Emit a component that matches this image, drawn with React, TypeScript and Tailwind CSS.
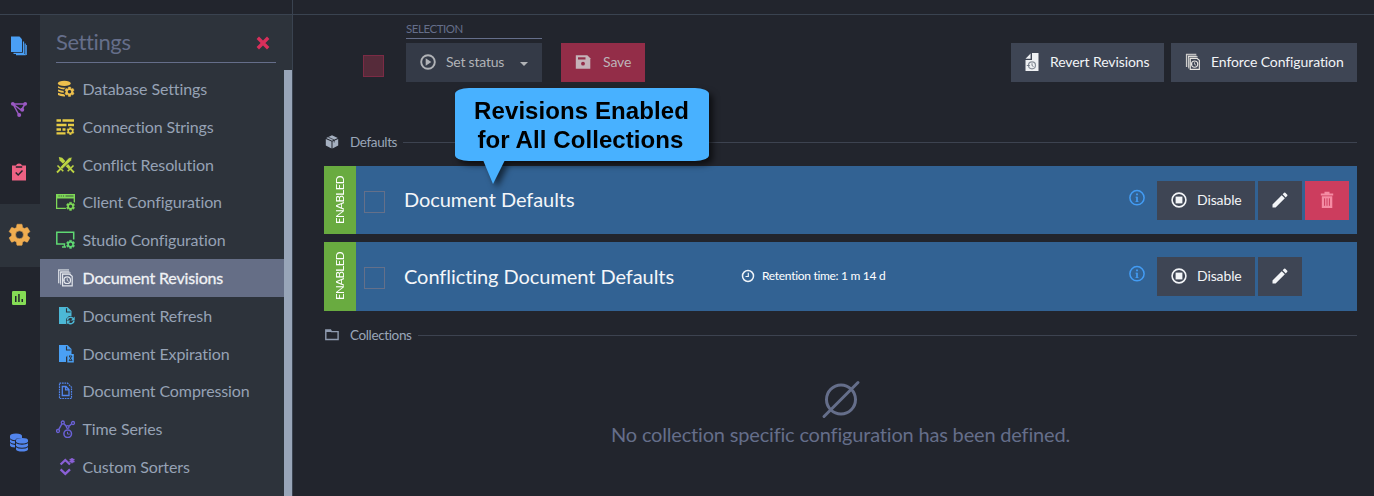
import React from "react";

const gearPath =
  "M19.14 12.94c.04-.3.06-.61.06-.94s-.02-.64-.07-.94l2.03-1.58a.49.49 0 0 0 .12-.61l-1.92-3.32a.49.49 0 0 0-.59-.22l-2.39.96a7 7 0 0 0-1.62-.94l-.36-2.54a.48.48 0 0 0-.48-.41h-3.84a.47.47 0 0 0-.47.41l-.36 2.54c-.59.24-1.13.57-1.62.94l-2.39-.96a.48.48 0 0 0-.59.22L2.74 8.87a.48.48 0 0 0 .12.61l2.03 1.58c-.05.3-.09.63-.09.94s.02.64.07.94l-2.03 1.58a.49.49 0 0 0-.12.61l1.92 3.32c.12.22.37.29.59.22l2.39-.96c.5.38 1.03.7 1.62.94l.36 2.54c.05.24.24.41.48.41h3.84c.24 0 .44-.17.47-.41l.36-2.54c.59-.24 1.13-.56 1.62-.94l2.39.96c.22.08.47 0 .59-.22l1.92-3.32a.48.48 0 0 0-.12-.61zM12 15.6a3.6 3.6 0 1 1 0-7.2 3.6 3.6 0 0 1 0 7.2z";

const Gear = ({ x, y, s, bg }: { x: number; y: number; s: number; bg?: string }) => (
  <g transform={`translate(${x} ${y}) scale(${s / 20})`}>
    {bg && <circle cx="10" cy="10" r="12" fill={bg} />}
    <path transform="translate(-2 -2)" fill="currentColor" stroke="currentColor" strokeWidth="1" d={gearPath} />
  </g>
);

const PANEL = "#2d333b";

/* Menu icons share a 20x18 canvas */
const MenuSvg = ({ children }: { children: React.ReactNode }) => (
  <svg width="20" height="18" viewBox="0 0 20 18" fill="none" stroke="none">
    {children}
  </svg>
);

const DatabaseSettings = () => (
  <MenuSvg>
    <ellipse cx="8.3" cy="3.4" rx="6.4" ry="2.7" fill="currentColor" />
    <path d="M2 6.2q6 3 12.6 0v1.6q-6.4 3.2-12.6 0zM2 9.5q3.4 1.600 7 1.400v1.900q-4 .1-7-1.500zM2 12.800q3.400 1.600 7 1.400v2.200q-4.400.2-7-1.400z" fill="currentColor" />
    <Gear x={8.600} y={6.800} s={9.800} bg={PANEL} />
    <circle cx="13.500" cy="11.700" r="1.600" fill={PANEL} />
  </MenuSvg>
);

const ConnectionStrings = () => (
  <MenuSvg>
    <path d="M.5 1.200h4.500v2.500h-4.500zM6.500 1.200h11.500v2.500h-11.500zM.5 5.700h10v2.500h-10zM12 5.700h6v2.500h-6zM.5 10.200h4.500v2.500h-4.500zM6.500 10.200h3v2.500h-3zM.5 14.200h9v2.300h-9z" fill="currentColor" />
    <Gear x={10.700} y={9.300} s={7.500} bg={PANEL} />
    <circle cx="14.450" cy="13.050" r="1.300" fill={PANEL} />
  </MenuSvg>
);

const ConflictResolution = () => (
  <MenuSvg>
    <path d="M2.800 1l3.400.8 8.800 9.400-2.200 2L3.600 4.500z" fill="currentColor" />
    <path d="M16.200 1l-3.400.8L4 11.200l2.200 2L15.400 4.500z" fill="currentColor" stroke={PANEL} strokeWidth=".7" />
    <path d="M1.500 9.500l5.800 5.800M17.500 9.500l-5.800 5.800" stroke="currentColor" strokeWidth="1.600" />
    <path d="M1 16.500l3.800-3.800M18 16.500l-3.800-3.800" stroke="currentColor" strokeWidth="1.900" />
  </MenuSvg>
);

const ClientConfiguration = () => (
  <MenuSvg>
    <path d="M0 1h19v4.500H0z" fill="currentColor" />
    <path d="M2.500 3h1.200M4.700 3h1.200M6.900 3h1.200M9.500 3h8" stroke={PANEL} strokeWidth=".8" />
    <path d="M.6 5v10.300h9.500M18.300 5v4.500" stroke="currentColor" strokeWidth="1.300" />
    <Gear x={10.200} y={9} s={8.700} bg={PANEL} />
    <circle cx="14.550" cy="13.350" r="1.500" fill={PANEL} />
  </MenuSvg>
);

const StudioConfiguration = () => (
  <MenuSvg>
    <path d="M9.500 13H.8V1.200h16.900V8.500" stroke="currentColor" strokeWidth="1.500" />
    <path d="M6 16h4M8.500 13v3" stroke="currentColor" strokeWidth="1.500" />
    <Gear x={10.200} y={9} s={8.700} bg={PANEL} />
    <circle cx="14.550" cy="13.350" r="1.500" fill={PANEL} />
  </MenuSvg>
);

const RevisionGlyph = ({ bg }: { bg: string }) => (
  <>
    <path d="M2 .3h11v14H2z" fill="currentColor" opacity=".85" />
    <path d="M3.700 15.500V2h11" stroke={bg} strokeWidth=".8" />
    <path d="M4.200 2.500h9l1.500 1v12.300H4.200z" fill="currentColor" opacity=".85" />
    <path d="M5.600 17V4.200h9.200" stroke={bg} strokeWidth=".9" />
    <path d="M6.600 5.200h7l2.600 2v9.600H6.600z" fill={bg} stroke="currentColor" strokeWidth="1.200" />
    <circle cx="11.200" cy="11.200" r="3.300" stroke="currentColor" strokeWidth="1.200" />
    <path d="M11.200 9.300v2.200l1.500.9M7 11.200h2" stroke="currentColor" strokeWidth=".9" />
  </>
);

const DocumentRevisions = () => (
  <MenuSvg>
    <RevisionGlyph bg="#656e86" />
  </MenuSvg>
);

const DocBase = () => (
  <>
    <path d="M3 0h8.500l4 4V9h-2.500l-3 3v5H3z" fill="currentColor" />
    <path d="M10.500 1.200v3.800h4" stroke={PANEL} strokeWidth="1.100" />
  </>
);

const DocumentRefresh = () => (
  <MenuSvg>
    <DocBase />
    <path d="M11.300 13a3.300 3.300 0 0 1 5.800-1.500M18 14a3.300 3.300 0 0 1-5.800 1.500" stroke="currentColor" strokeWidth="1.500" />
    <path d="M18.700 9.500v4h-3.800zM10.700 17.500v-4h3.800z" fill="currentColor" />
  </MenuSvg>
);

const DocumentExpiration = () => (
  <MenuSvg>
    <DocBase />
    <path d="M11.300 9h6.500v8.500h-6.500z" fill="currentColor" />
    <path d="M13 11h3l-2.900 4.600h3l-2.900-4.600z" stroke={PANEL} strokeWidth=".9" />
  </MenuSvg>
);

const DocumentCompression = () => (
  <MenuSvg>
    <path d="M3.500 1.200h8l4 4v11.300h-12z" stroke="currentColor" strokeWidth="1.200" strokeDasharray="1.700 .8" />
    <path d="M6.300 4.500h3.700l3 3v6h-6.700zM9.600 4.500v3.400H13" stroke="currentColor" strokeWidth="1.300" />
  </MenuSvg>
);

const TimeSeries = () => (
  <MenuSvg>
    <path d="M2.700 9.700L5.800 4M8 3.800l2.500 2.700M13 6.300L15.500 4" stroke="currentColor" strokeWidth="1.500" />
    <circle cx="2" cy="11" r="1.500" stroke="currentColor" strokeWidth="1.300" />
    <circle cx="6.800" cy="2.500" r="1.500" stroke="currentColor" strokeWidth="1.300" />
    <circle cx="11.700" cy="7" r="1.300" stroke="currentColor" strokeWidth="1.300" />
    <circle cx="17" cy="3" r="1.500" stroke="currentColor" strokeWidth="1.300" />
    <circle cx="11.700" cy="13.800" r="3.800" fill={PANEL} stroke="currentColor" strokeWidth="1.500" />
    <path d="M11.500 11.800V14.100h2.300" stroke="currentColor" strokeWidth="1" />
  </MenuSvg>
);

const CustomSorters = () => (
  <MenuSvg>
    <path d="M4.600 6.500l4.700-4.500L14 6.500M4.600 11.300l4.700 4.500 4.700-4.500" stroke="currentColor" strokeWidth="2.300" />
    <path d="M16 0v5.200M13.600 1.200l4.800 2.800M18.400 1.200l-4.800 2.800" stroke="currentColor" strokeWidth="1.600" />
  </MenuSvg>
);

const Analyzers = () => (
  <MenuSvg>
    <path d="M4.500 8L9.500 3l5 5" stroke="currentColor" strokeWidth="2" />
    <path d="M16 0v5M13.700 1.200l4.600 2.600M18.300 1.200l-4.600 2.600" stroke="currentColor" strokeWidth="1.500" />
  </MenuSvg>
);

const menu: { label: string; color: string; icon: () => React.ReactElement; active?: boolean }[] = [
  { label: "Database Settings", color: "text-[#edc04d]", icon: DatabaseSettings },
  { label: "Connection Strings", color: "text-[#e6cc45]", icon: ConnectionStrings },
  { label: "Conflict Resolution", color: "text-[#bcd443]", icon: ConflictResolution },
  { label: "Client Configuration", color: "text-[#7ed957]", icon: ClientConfiguration },
  { label: "Studio Configuration", color: "text-[#5fd873]", icon: StudioConfiguration },
  { label: "Document Revisions", color: "text-[#e3e6ec]", icon: DocumentRevisions, active: true },
  { label: "Document Refresh", color: "text-[#4cb8d6]", icon: DocumentRefresh },
  { label: "Document Expiration", color: "text-[#4aa0f5]", icon: DocumentExpiration },
  { label: "Document Compression", color: "text-[#5285ed]", icon: DocumentCompression },
  { label: "Time Series", color: "text-[#6a61d6]", icon: TimeSeries },
  { label: "Custom Sorters", color: "text-[#8a60d6]", icon: CustomSorters },
  { label: "", color: "text-[#9d55b8]", icon: Analyzers },
];

const RailDocuments = () => (
  <svg width="18" height="20" viewBox="0 0 18 20" fill="none">
    <path d="M1 .5h8.500l2.500 2.800V16H1z" fill="#4a9ff5" />
    <path d="M13.500 5.500V17.300H3.500M15.200 7.500v11.200H6" stroke="#4a9ff5" strokeWidth="1.200" />
    <path d="M16.500 9v10" stroke="#4a9ff5" strokeWidth=".8" />
  </svg>
);

const RailGraph = () => (
  <svg width="18" height="17" viewBox="0 0 18 17" fill="none" stroke="#9b59c4">
    <path d="M3 3h12M3 3l6 11M3 3l8 6M15 3l-3.500 6" strokeWidth="1.500" />
    <g fill="#9b59c4" stroke="none">
      <circle cx="2.800" cy="2.800" r="1.900" />
      <circle cx="15.200" cy="2.800" r="1.900" />
      <circle cx="12.200" cy="8.800" r="2" />
      <circle cx="9.200" cy="14" r="2" />
    </g>
  </svg>
);

const RailTasks = () => (
  <svg width="16" height="18" viewBox="0 0 16 18" fill="none">
    <path d="M1 2.500h4Q5.500.5 8 .5t3 2h4V17.500H1z" fill="#ee6283" />
    <path d="M4.800 4h6.400M4.700 9.500l2.500 2.600 4.300-4.500" stroke="#22252d" strokeWidth="1.400" />
  </svg>
);

const RailGear = () => (
  <svg width="24" height="24" viewBox="0 0 24 24" className="text-[#f0ad50]">
    <g transform="translate(-.7 -1.400) scale(1.100)">
      <path d={gearPath} fill="currentColor" stroke="currentColor" strokeWidth=".5" />
    </g>
  </svg>
);

const RailStats = () => (
  <svg width="14" height="14" viewBox="0 0 14 14">
    <rect width="14" height="14" rx="1.200" fill="#85dc55" />
    <path d="M3 5h1.500v6H3zM6.200 3h1.500v8H6.200zM9.500 8h1.500v3H9.500z" fill="#22252d" />
  </svg>
);

const RailCluster = () => (
  <svg width="20" height="20" viewBox="0 0 20 20" fill="#5285ed">
    <path d="M1 3q0-2.500 6-2.500T13 3v2q-6-.5-6.700 2.200Q2 7 1 5zM1 6.300q1.500 1.800 5 1.900v2.500Q1.500 10.500 1 8.800zM1 10q1.500 1.800 5 1.900v2.600Q1.500 14.300 1 12.500z" />
    <path d="M7 7.200q0-2.200 6-2.200t6 2.200v1.500q-1 1.800-6 1.800T7 8.700zM7 10.300q2 1.400 6 1.400t6-1.400v2.500q-1 1.900-6 1.900t-6-1.900zM7 14.300q2 1.500 6 1.500t6-1.500v2.300q-1 2-6 2t-6-2z" />
  </svg>
);

const RailSlot = ({ children, active }: { children: React.ReactNode; active?: boolean }) => (
  <div
    className={
      active
        ? "flex h-[63px] shrink-0 items-center justify-center bg-[#2d333b] pr-[2px] pb-px"
        : "flex h-[63px] shrink-0 items-center justify-center pr-[2px] pb-px"
    }
  >
    {children}
  </div>
);

const InfoIcon = () => (
  <svg width="18" height="18" viewBox="0 0 18 18" fill="none">
    <circle cx="9" cy="8.700" r="7.100" stroke="#439cf4" strokeWidth="1.500" />
    <path d="M9 4.600v1.700" stroke="#439cf4" strokeWidth="1.800" />
    <path d="M9 7.800v5" stroke="#439cf4" strokeWidth="1.700" />
    <path d="M7.500 8.200H9M7.500 12.500h3" stroke="#439cf4" strokeWidth=".8" />
  </svg>
);

const StopIcon = () => (
  <svg width="16" height="16" viewBox="0 0 16 16" fill="none">
    <circle cx="8" cy="8" r="6.900" stroke="#f2f4f7" strokeWidth="1.600" />
    <path d="M4.600 4.600h6.800v6.800H4.600z" fill="#f2f4f7" />
  </svg>
);

const PencilIcon = () => (
  <svg width="20" height="20" viewBox="0 0 24 24" fill="#f2f4f7">
    <path d="M3 17.250V21h3.750L17.810 9.940l-3.750-3.750zM20.710 7.040a1 1 0 0 0 0-1.410l-2.340-2.340a1 1 0 0 0-1.410 0l-1.830 1.830 3.750 3.750z" />
  </svg>
);

const TrashIcon = () => (
  <svg width="14" height="18" viewBox="0 0 14 18" fill="none">
    <path d="M.8 2.500h3.700V.8h5v1.700h3.700v1.900H.8zM1.800 5.300h10.500V17H1.800z" fill="#f58ca4" />
    <path d="M4.600 7.300v7.500M7 7.300v7.500M9.400 7.300v7.500" stroke="#cc3d5e" strokeWidth="1" />
  </svg>
);

const PlayIcon = () => (
  <svg width="16" height="16" viewBox="0 0 16 16" fill="none">
    <circle cx="8" cy="8" r="6.800" stroke="#b1b3b7" strokeWidth="1.900" />
    <path d="M5.700 4.300v7.400l5.600-3.700z" fill="#b1b3b7" />
  </svg>
);

const SaveIcon = () => (
  <svg width="16" height="16" viewBox="0 0 16 16" fill="none">
    <path d="M.8 1.200h11.500l3 3v10.600H.8z" fill="#c5b3b9" />
    <path d="M3 3.300h7.500v2.200H3z" fill="#932d48" />
    <circle cx="8" cy="9.700" r="1.900" fill="#932d48" />
  </svg>
);

const RevertIcon = () => (
  <svg width="16" height="18" viewBox="0 0 16 18" fill="none">
    <path d="M8 0h6.500v18h-13V7H8zM6.600.4v5.300H1.500z" fill="#eef0f3" />
    <circle cx="8" cy="12.300" r="3.500" stroke="#878e99" strokeWidth="1.200" />
    <path d="M8 10.300v2.300l1.500.9M2.800 12.500h3" stroke="#6c7480" strokeWidth=".9" />
  </svg>
);

const EnforceIcon = () => (
  <svg width="18" height="18" viewBox="0 0 19 18" fill="none" className="text-[#e6e4e0]">
    <RevisionGlyph bg="#3e4554" />
  </svg>
);

const CubeIcon = () => (
  <svg width="14" height="14" viewBox="0 0 14 14" fill="#a5b0c0">
    <path d="M7 .3L12.800 3 7 5.800 1.200 3zM.8 3.900l5.700 2.700v7L.8 10.600zM13.200 3.900L7.500 6.600v7l5.700-3z" />
    <path d="M3.300 2.200l5.900 2.700v2.600" fill="none" stroke="#22252d" strokeWidth=".7" />
  </svg>
);

const FolderIcon = () => (
  <svg width="14" height="12" viewBox="0 0 14 12" fill="none">
    <path d="M.8 10.500V1h4.700l1 1.600h6.600v7.900z" stroke="#8f9bb0" strokeWidth="1.400" />
    <path d="M.8 1h4.700l1 2H.8z" fill="#8f9bb0" />
  </svg>
);

const ClockIcon = () => (
  <svg width="14" height="14" viewBox="0 0 14 14" fill="none" stroke="#eef3f8">
    <circle cx="7" cy="7" r="5.500" strokeWidth="1.500" />
    <path d="M7.300 3.700V7.500H4.500" strokeWidth="1.200" />
  </svg>
);

const SectionHeader = ({ icon, label, className }: { icon: React.ReactNode; label: string; className: string }) => (
  <div className={`flex h-5 items-center ${className}`}>
    <span className="flex w-[26px] shrink-0 pl-px">{icon}</span>
    <span className="text-[13.5px] leading-5 tracking-[-0.37px] text-[#9aa6b8]">{label}</span>
    <span className="ml-[6px] h-px flex-1 bg-[#3d4350]" />
  </div>
);

const RevisionRow = ({
  title,
  retention,
  removable,
  className,
}: {
  title: string;
  retention?: string;
  removable?: boolean;
  className: string;
}) => (
  <div className={`flex bg-[#326293] ${className}`}>
    <div className="flex w-8 items-center justify-center bg-[#69ab40]">
      <span className="rotate-180 text-[11.5px] leading-none tracking-[-0.55px] text-white [writing-mode:vertical-rl]">ENABLED</span>
    </div>
    <div className="mt-[25px] ml-2 h-[22px] w-[21px] border border-[#64708a]" />
    <h3 className={`${removable ? "mt-[18px]" : "mt-[19px]"} ml-[19px] w-[337px] text-[20px] leading-[30px] tracking-[-0.06px] whitespace-nowrap text-[#f4f6f9]`}>
      {title}
    </h3>
    <div className="mt-[26px] flex h-4 flex-1 items-center gap-[7px] text-[12px] tracking-[-0.3px] text-white">
      {retention && (
        <>
          <ClockIcon />
          <span>{retention}</span>
        </>
      )}
    </div>
    <div className="mt-[23px] mr-[11px]">
      <InfoIcon />
    </div>
    <div className="mt-[15px] mr-2 flex h-[39px] w-48 gap-[3px]">
      <button className="flex w-[98px] items-center gap-[10px] bg-[#3e4554] pb-px pl-[14px] text-[14px] tracking-[-0.12px] text-[#f2f4f7]">
        <StopIcon />
        <span className="pb-px">Disable</span>
      </button>
      <button aria-label="Edit" className="flex w-11 items-center justify-center bg-[#3e4554] pb-px">
        <PencilIcon />
      </button>
      {removable && (
        <button aria-label="Delete" className="flex w-11 items-center justify-center bg-[#cc3d5e] pb-px">
          <TrashIcon />
        </button>
      )}
    </div>
  </div>
);

export default function App() {
  return (
    <div className="flex h-[496px] w-[1374px] flex-col overflow-hidden bg-[#22252d] font-['Lato',sans-serif]">
      <header className="flex h-[15px] shrink-0 border-b border-[#3a4350]">
        <div className="w-[293px] border-r border-[#3a4350]" />
      </header>
      <div className="flex min-h-0 flex-1">
        <nav className="flex w-10 shrink-0 flex-col">
          <RailSlot><RailDocuments /></RailSlot>
          <RailSlot><RailGraph /></RailSlot>
          <RailSlot><RailTasks /></RailSlot>
          <RailSlot active><RailGear /></RailSlot>
          <RailSlot><RailStats /></RailSlot>
          <div className="mt-auto mb-[43px] flex justify-center pr-[2px]">
            <RailCluster />
          </div>
        </nav>

        <aside className="flex w-[253px] shrink-0 flex-col overflow-hidden border-r border-[#3a4350] bg-[#2d333b]">
          <div className="mr-[16px] ml-4 flex h-12 shrink-0 items-center justify-between border-b border-[#656e8a] pt-[7px]">
            <h2 className="text-[22px] leading-none tracking-[-0.4px] text-[#656e8a]">Settings</h2>
            <svg width="14" height="14" viewBox="0 0 14 14" className="mt-[2px] mr-[6px]">
              <path d="M1.800 1.800l10.400 10.400M12.200 1.800L1.800 12.200" stroke="#d82f5b" strokeWidth="3.400" />
            </svg>
          </div>
          <div className="mt-[7px] flex min-h-0 flex-1 overflow-hidden">
            <ul className="flex w-[244px] flex-col pt-[0.2px]">
              {menu.map((m, i) => (
                <li
                  key={i}
                  className={
                    m.active
                      ? "flex h-[37.8px] shrink-0 items-center bg-[#656e86] pl-4"
                      : "flex h-[37.8px] shrink-0 items-center pl-4"
                  }
                >
                  <span className={`w-[26.500px] ${m.color}`}>
                    <m.icon />
                  </span>
                  <span
                    className={
                      m.active
                        ? "text-[16px] leading-6 tracking-[-0.16px] text-[#f0f2f5] [-webkit-text-stroke:0.3px]"
                        : "text-[16px] leading-6 tracking-[-0.11px] text-[#96a2b5]"
                    }
                  >
                    {m.label}
                  </span>
                </li>
              ))}
            </ul>
            <div className="w-2 bg-[#98a5b8]" />
          </div>
        </aside>

        <main className="relative flex min-w-0 flex-1 flex-col pr-[17px] pl-[31px]">
          <div className="flex h-[67px] items-end">
            <div className="mb-[5px] ml-[39px] h-[22px] w-[21px] border border-[#7c2b45] bg-[#562b3a]" />
            <div className="ml-[22px] flex w-[136px] flex-col">
              <div className="mb-1 border-b border-[#656e8a] pb-px text-[11.5px] leading-[17px] tracking-[-0.45px] text-[#656e8a]">SELECTION</div>
              <button className="flex h-[39px] items-center bg-[#343a47] pb-px pl-[14px] text-[14px] tracking-[-0.22px] text-[#b1b3b7]">
                <PlayIcon />
                <span className="ml-[10px] pb-px">Set status</span>
                <span className="mt-[4px] ml-[16px] border-x-[4.500px] border-t-[4.500px] border-x-transparent border-t-[#b1b3b7]" />
              </button>
            </div>
            <button className="ml-[19px] flex h-[39px] w-[84px] items-center gap-[12px] bg-[#932d48] pb-px pl-[14px] text-[14px] tracking-[-0.12px] text-[#bdb4b9]">
              <SaveIcon />
              <span className="pb-px">Save</span>
            </button>
            <div className="ml-auto flex h-[39px] gap-[7px] text-[14px] tracking-[-0.1px] text-[#f2f4f7]">
              <button className="flex w-[153px] items-center gap-[10px] bg-[#3e4554] pb-px pl-[13px]">
                <RevertIcon />
                <span className="pb-px">Revert Revisions</span>
              </button>
              <button className="flex w-[186px] items-center gap-[9px] bg-[#3e4554] pb-px pl-[13px]">
                <EnforceIcon />
                <span className="pb-px">Enforce Configuration</span>
              </button>
            </div>
          </div>

          <SectionHeader className="mt-[50px]" icon={<CubeIcon />} label="Defaults" />
          <RevisionRow className="mt-[14px] h-[68px]" title="Document Defaults" removable />
          <RevisionRow className="mt-2 h-[69px]" title="Conflicting Document Defaults" retention="Retention time: 1 m 14 d" />
          <SectionHeader className="mt-[14px]" icon={<FolderIcon />} label="Collections" />

          <div className="mt-[34px] flex flex-col items-center text-[#656e8a]">
            <svg width="40" height="40" viewBox="0 0 40 40" fill="none" stroke="currentColor" strokeWidth="3" strokeLinecap="round">
              <circle cx="20" cy="20.500" r="14.500" />
              <path d="M3 37.500L37 3.500" />
            </svg>
            <p className="text-[20px] leading-[30px] tracking-[-0.18px]">No collection specific configuration has been defined.</p>
          </div>

          <div className="absolute top-[73px] left-[162px] drop-shadow-[4px_4px_3px_rgba(0,0,0,0.6)]">
            <div className="flex h-[73px] w-[254px] flex-col items-center justify-center rounded-[14px/6px] bg-[#48b1ff] pr-px font-['Liberation_Sans',Arial,sans-serif] text-[24px] leading-[29px] font-bold tracking-[0.08px] whitespace-nowrap text-black">
              <span>Revisions Enabled</span>
              <span className="mr-[2px]">for All Collections</span>
            </div>
            <svg width="22" height="24" viewBox="0 0 22 24" className="-mt-px ml-[28px] block">
              <path d="M0 0h22L10 24z" fill="#48b1ff" />
            </svg>
          </div>
        </main>
      </div>
    </div>
  );
}
